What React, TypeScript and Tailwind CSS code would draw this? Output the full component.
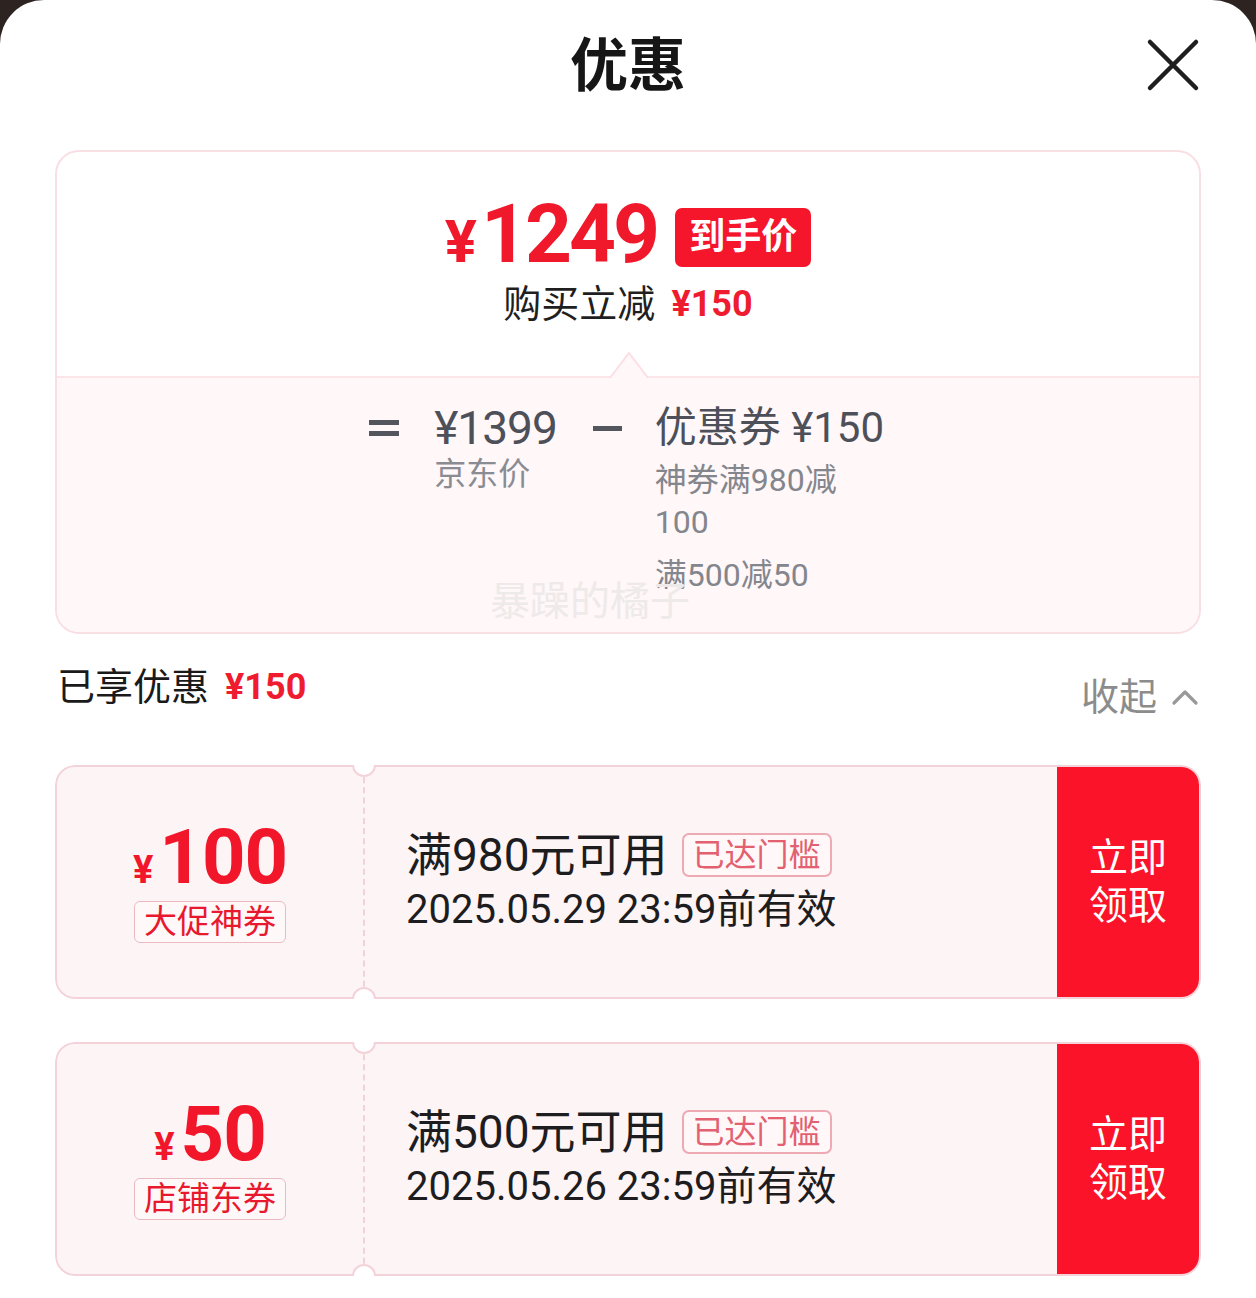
import React from "react";

type Coupon = {
  amount: string;
  tag: string;
  rule: string;
  expire: string;
};

const coupons: Coupon[] = [
  { amount: "100", tag: "大促神券", rule: "满980元可用", expire: "2025.05.29 23:59前有效" },
  { amount: "50", tag: "店铺东券", rule: "满500元可用", expire: "2025.05.26 23:59前有效" },
];

function CouponCard({ coupon }: { coupon: Coupon }) {
  return (
    <div className="relative h-[234px] overflow-hidden rounded-[20px]">
      <div className="flex h-full rounded-[20px] border-2 border-[#f3d3d9] bg-[#fdf4f5]">
        <div className="flex w-[306px] flex-col items-center justify-center pt-[4px]">
          <div className="flex items-baseline text-[#f2162b]">
            <span className="mr-[6px] text-[38px] font-bold leading-none">¥</span>
            <span className="text-[76px] font-bold leading-[64px] tracking-[-1px]">{coupon.amount}</span>
          </div>
          <span className="mt-[12px] rounded-[6px] border border-[#ebb9c0] bg-[#fff8f9] px-[9px] text-[33px] leading-[40px] text-[#e8192e]">
            {coupon.tag}
          </span>
        </div>
        <div className="flex flex-1 flex-col justify-center border-l-2 border-dashed border-[#f0d2d7] pl-[41px]">
          <div className="flex items-center">
            <span className="text-[46px] leading-[54px] text-[#1d1d1f]">{coupon.rule}</span>
            <span className="ml-[14px] rounded-[7px] border-2 border-[#eeaab3] bg-[#fff7f8] px-[9px] text-[32px] leading-[40px] text-[#e2606f]">
              已达门槛
            </span>
          </div>
          <span className="mt-[2px] text-[40px] leading-[52px] text-[#1d1d1f]">{coupon.expire}</span>
        </div>
        <div className="flex w-[142px] flex-col items-center justify-center rounded-r-[18px] bg-[#fb1429] text-[39px] leading-[48px] text-white">
          <span>立即</span>
          <span>领取</span>
        </div>
      </div>
      <div className="absolute left-[297px] top-[-12px] h-[24px] w-[24px] rounded-full border-2 border-[#f3d3d9] bg-white" />
      <div className="absolute bottom-[-12px] left-[297px] h-[24px] w-[24px] rounded-full border-2 border-[#f3d3d9] bg-white" />
    </div>
  );
}

export default function App() {
  return (
    <div className="min-h-[1298px] w-[1256px] bg-[#2d2421] font-[Roboto,'Noto_Sans_CJK_SC',sans-serif]">
      <div className="min-h-[1298px] rounded-t-[44px] bg-white">
        {/* header */}
        <div className="grid h-[150px] grid-cols-[1fr_auto_1fr] items-start">
          <div />
          <h1 className="pt-[34px] text-[58px] font-bold leading-[64px] text-[#161616]">优惠</h1>
          <div className="flex justify-end pr-[56px] pt-[38px]">
            <svg width="54" height="54" viewBox="0 0 54 54" fill="none">
              <path d="M4 4L50 50M50 4L4 50" stroke="#1f1f1f" strokeWidth="4.5" strokeLinecap="round" />
            </svg>
          </div>
        </div>

        {/* summary card */}
        <div className="mx-[55px] overflow-hidden rounded-[24px] border-2 border-[#f8dfe4]">
          <div className="flex h-[224px] flex-col items-center pt-[53px]">
            <div className="flex h-[64px] items-center">
              <div className="flex items-baseline text-[#f0192c]">
                <span className="mr-[4px] text-[60px] font-bold leading-none">¥</span>
                <span className="text-[82px] font-bold leading-[64px] tracking-[-3px]">1249</span>
              </div>
              <span className="ml-[18px] rounded-[7px] bg-[#f5162c] px-[14px] text-[36px] font-bold leading-[59px] text-white">
                到手价
              </span>
            </div>
            <div className="mt-[13px] flex items-center leading-[44px]">
              <span className="text-[38px] text-[#1f1f1f]">购买立减</span>
              <span className="ml-[16px] text-[36px] font-bold text-[#ef1b2e]">¥150</span>
            </div>
          </div>
          <div className="relative h-[256px] border-t-2 border-[#fbe5e9] bg-[#fff7f8]">
            <svg className="absolute left-[553px] top-[-27px]" width="38" height="27" viewBox="0 0 38 27">
              <path d="M0 27L19 2L38 27Z" fill="#fff7f8" stroke="#fbe0e5" strokeWidth="2" />
              <rect x="2" y="25" width="34" height="2" fill="#fff7f8" />
            </svg>
            <div className="flex justify-center pt-[24px]">
              <div className="flex h-[52px] flex-col justify-center gap-[6px]">
                <div className="h-[5px] w-[30px] bg-[#54565e]" />
                <div className="h-[5px] w-[30px] bg-[#54565e]" />
              </div>
              <div className="ml-[35px] flex flex-col">
                <span className="text-[46px] leading-[52px] tracking-[-1px] text-[#4d5058]">¥1399</span>
                <span className="text-[32px] leading-[40px] text-[#8a8c93]">京东价</span>
              </div>
              <div className="ml-[36px] flex h-[52px] items-center">
                <div className="h-[5px] w-[29px] bg-[#54565e]" />
              </div>
              <div className="ml-[33px] flex w-[232px] flex-col">
                <span className="whitespace-nowrap text-[42px] leading-[52px] text-[#4d5058]">优惠券 ¥150</span>
                <span className="mt-[5px] text-[32px] leading-[42px] text-[#84868d]">神券满980减100</span>
                <span className="mt-[11px] text-[32px] leading-[42px] text-[#84868d]">满500减50</span>
              </div>
            </div>
            <span className="absolute left-[433px] top-[202px] text-[40px] leading-[44px] text-[#eeeaea]">暴躁的橘子</span>
          </div>
        </div>

        {/* enjoyed row */}
        <div className="flex items-start justify-between px-[57px] pt-[28px]">
          <div className="flex items-center leading-[50px]">
            <span className="text-[38px] text-[#1a1a1a]">已享优惠</span>
            <span className="ml-[16px] text-[36px] font-bold text-[#ef1b2e]">¥150</span>
          </div>
          <div className="mt-[10px] flex items-center leading-[50px] text-[#8c8c8c]">
            <span className="text-[38px]">收起</span>
            <svg className="ml-[14px]" width="28" height="18" viewBox="0 0 28 18" fill="none">
              <path d="M3 15L14 4L25 15" stroke="#999" strokeWidth="3.2" strokeLinecap="round" strokeLinejoin="round" />
            </svg>
          </div>
        </div>

        {/* coupons */}
        <div className="mx-[55px] mt-[43px] flex flex-col gap-[43px] pb-[22px]">
          {coupons.map((c) => (
            <CouponCard key={c.amount} coupon={c} />
          ))}
        </div>
      </div>
    </div>
  );
}
